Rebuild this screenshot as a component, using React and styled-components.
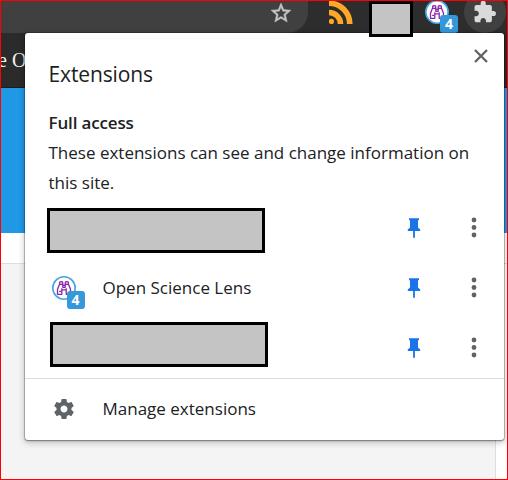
import React from "react";
import styled, { createGlobalStyle } from "styled-components";

const Global = createGlobalStyle`
  * { box-sizing: border-box; }
  body { margin: 0; font-family: "Open Sans", "Noto Sans", sans-serif; }
`;

const Frame = styled.div`
  position: relative;
  width: 508px;
  height: 480px;
  border: 1px solid #ff0000;
  background: #f4f4f4;
  display: flex;
  flex-direction: column;
  overflow: hidden;
`;

const Toolbar = styled.header`
  height: 32px;
  flex: none;
  display: flex;
  align-items: flex-start;
  background: #2d2d2d;
`;

const AddressBar = styled.div`
  width: 307px;
  height: 32px;
  display: flex;
  justify-content: flex-end;
  padding: 0 15px 0 0;
  background: #404040;
  border-radius: 0 0 21px 0;
`;

const Svg = styled.svg`
  display: block;
  flex: none;
`;

const Spacer = styled.div`
  width: ${(p) => p.$w}px;
  flex: none;
`;

const Redacted = styled.div`
  position: relative;
  z-index: ${(p) => (p.$over ? 3 : 0)};
  flex: none;
  width: ${(p) => p.$w}px;
  height: ${(p) => p.$h}px;
  margin: ${(p) => p.$m || 0};
  border: 3px solid #000;
  background: #c4c4c4;
`;

const PuzzleButton = styled.div`
  width: 42px;
  height: 32px;
  margin-left: 5px;
  overflow: hidden;
  background: radial-gradient(circle at 21px 11px, #404040 20.5px, transparent 21.2px);
`;

const SiteHeader = styled.div`
  height: 55px;
  flex: none;
  display: flex;
  align-items: center;
  background: #2b2b2b;
  border-bottom: 1px solid #1c1c1c;
`;

const SiteTitle = styled.div`
  margin-left: -3px;
  color: #f1f1f1;
  font: 20px/26px "Liberation Serif", serif;
  white-space: nowrap;
`;

const Banner = styled.div`
  height: 145px;
  flex: none;
  background: #1f99e6;
`;

const Strip = styled.div`
  height: 31px;
  flex: none;
  background: #fff;
  border-bottom: 1px solid #dedede;
`;

const Content = styled.div`
  flex: 1;
  display: flex;
  justify-content: flex-end;
`;

const Gutter = styled.div`
  width: 12px;
  background: #fff;
  border-left: 1px solid #dedede;
`;

const Popup = styled.section`
  position: absolute;
  z-index: 2;
  left: 24px;
  top: 32px;
  width: 479px;
  height: 407px;
  background: #fff;
  border-radius: 3px;
  box-shadow: 0 0 0 1px rgba(0, 0, 0, 0.18), 0 1px 2px rgba(0, 0, 0, 0.3), 0 2px 6px 1px rgba(0, 0, 0, 0.2);
  color: #202124;
  display: flex;
  flex-direction: column;
`;

const TitleRow = styled.div`
  height: 75px;
  flex: none;
  display: flex;
  justify-content: space-between;
  padding: 16px 16.5px 0 23.5px;
`;

const Title = styled.h1`
  margin: 10px 0 0;
  font-size: 21px;
  line-height: 30px;
  font-weight: 400;
  letter-spacing: -0.12px;
  height: 30px;
`;

const Access = styled.div`
  height: 90px;
  flex: none;
  padding-left: 23.5px;
  font-size: 17px;
  line-height: 30px;
  white-space: nowrap;
`;

const Line = styled.div`
  letter-spacing: ${(p) => p.$ls || 0}px;
  font-weight: ${(p) => (p.$strong ? 600 : 400)};
`;

const Row = styled.div`
  height: 60px;
  flex: none;
  display: flex;
  align-items: center;
`;

const Name = styled.div`
  flex: none;
  font-size: 17px;
  line-height: 30px;
  white-space: nowrap;
`;

const Actions = styled.div`
  margin-left: auto;
  padding-right: 19px;
  display: flex;
  align-items: center;
  gap: 42px;
`;

const Footer = styled.div`
  height: 61px;
  flex: none;
  border-top: 1px solid #dadce0;
  display: flex;
  align-items: center;
  padding-left: 26.5px;
`;

const IconWrap = styled.div`
  position: relative;
  width: 34px;
  height: 34px;
  flex: none;
  margin: ${(p) => p.$m};
`;

const Badge = styled.span`
  position: absolute;
  left: 15px;
  top: 15px;
  width: 18px;
  height: 18px;
  border-radius: 3px;
  background: #3498db;
  color: #fff;
  font: 700 14px/18px "Open Sans", sans-serif;
  text-align: center;
`;

function LensIcon({ m }) {
  return (
    <IconWrap $m={m}>
      <Svg width="24" height="24" viewBox="0 0 24 24">
        <circle cx="12" cy="12" r="11.2" fill="#fff" stroke="#42a5e6" strokeWidth="1.6" />
        <g fill="none" stroke="#8e24aa" strokeWidth="1.3" strokeLinejoin="round">
          <path d="M7.700 8.300V6.200l1.500-.6 1.500.6v2.100M13.300 8.300V6.200l1.500-.6 1.500.6v2.100" />
          <path d="M7.500 8.300h3.300v3h2.400v-3h3.300l2 5v5h-4.300v-4.500h-4.400v4.500H5.500v-5z" />
          <path d="M10.800 9.300h2.400M9.800 13.800v-1.600M14.200 13.800v-1.600M7.200 15.300h2" />
        </g>
      </Svg>
      <Badge>4</Badge>
    </IconWrap>
  );
}

function Star() {
  return (
    <Svg width="24" height="24" viewBox="0 0 24 24">
      <path fill="#c4c4c4" stroke="#c4c4c4" strokeWidth="0.5" d="M22 9.24l-7.19-.62L12 2 9.19 8.63 2 9.24l5.46 4.73L5.82 21 12 17.27 18.18 21l-1.63-7.03L22 9.24zM12 15.4l-3.76 2.27 1-4.28-3.32-2.88 4.38-.38L12 6.1l1.71 4.04 4.38.38-3.32 2.88 1 4.28L12 15.4z" />
    </Svg>
  );
}

function Feed() {
  return (
    <Svg width="24" height="23" viewBox="0 0 24 23">
      <circle cx="2.4" cy="20.4" r="2.6" fill="#ffa726" />
      <path d="M0 11.5A11.5 11.5 0 0 1 11.5 23M0 2.2A20.8 20.8 0 0 1 20.8 23" fill="none" stroke="#ffa726" strokeWidth="5.600" />
    </Svg>
  );
}

function Puzzle() {
  return (
    <Svg width="42" height="32" viewBox="0 0 42 32">
      <path transform="translate(8.5 -1.2) scale(1.02)" fill="#dadada" d="M20.5 11H19V7c0-1.1-.9-2-2-2h-4V3.500a2.500 2.500 0 0 0-5 0V5H4c-1.100 0-1.990.9-1.990 2v3.800H3.500c1.490 0 2.700 1.210 2.700 2.700s-1.210 2.700-2.700 2.700H2V20c0 1.100.9 2 2 2h3.800v-1.500c0-1.490 1.210-2.700 2.700-2.700s2.700 1.210 2.700 2.700V22H17c1.100 0 2-.9 2-2v-4h1.500a2.500 2.500 0 0 0 0-5z" />
    </Svg>
  );
}

function Pin() {
  return (
    <Svg width="14" height="22" viewBox="0 0 14 22">
      <path fill="#1a73e8" d="M2 1.300h10v1.900h-1V10.500l2.200 2v1.600H7.900v6.700H6.100v-6.700H.8v-1.600l2.200-2V3.200H2z" />
    </Svg>
  );
}

function Dots() {
  return (
    <Svg width="22" height="22" viewBox="0 0 22 22" fill="#5f6368">
      <circle cx="11" cy="3" r="2.400" />
      <circle cx="11" cy="10.500" r="2.400" />
      <circle cx="11" cy="18" r="2.400" />
    </Svg>
  );
}

function Close() {
  return (
    <Svg width="14" height="14" viewBox="0 0 14 14">
      <path d="M1 1l12 12M13 1L1 13" stroke="#5f6368" strokeWidth="2.300" />
    </Svg>
  );
}

function Gear() {
  return (
    <Svg width="24" height="24" viewBox="0 0 24 24">
      <path fill="#5f6368" d="M19.430 12.980c.04-.32.07-.64.07-.98s-.03-.66-.07-.98l2.110-1.650c.19-.15.24-.42.12-.64l-2-3.460c-.12-.22-.39-.3-.61-.22l-2.490 1c-.52-.4-1.080-.73-1.690-.98l-.38-2.650C14.460 2.180 14.250 2 14 2h-4c-.25 0-.46.18-.49.42l-.38 2.650c-.61.25-1.170.59-1.690.98l-2.490-1c-.23-.09-.49 0-.61.22l-2 3.460c-.13.22-.07.49.12.64l2.110 1.650c-.04.32-.07.65-.07.98s.03.66.07.98l-2.110 1.650c-.19.15-.24.42-.12.64l2 3.460c.12.22.39.3.61.22l2.490-1c.52.4 1.080.73 1.690.98l.38 2.650c.03.24.24.42.49.42h4c.25 0 .46-.18.49-.42l.38-2.650c.61-.25 1.170-.59 1.690-.98l2.490 1c.23.09.49 0 .61-.22l2-3.460c.12-.22.07-.49-.12-.64l-2.110-1.650zM12 15.500c-1.930 0-3.500-1.570-3.500-3.500s1.570-3.500 3.500-3.500 3.500 1.570 3.500 3.500-1.570 3.500-3.500 3.500z" />
    </Svg>
  );
}

function RowActions() {
  return (
    <Actions>
      <Pin />
      <Dots />
    </Actions>
  );
}

export default function App() {
  return (
    <>
      <Global />
      <Frame>
        <Toolbar>
          <AddressBar>
            <Star />
          </AddressBar>
          <Spacer $w={21} />
          <Feed />
          <Spacer $w={16} />
          <Redacted $w={44} $h={36} $over />
          <LensIcon m="-1px 0 0 12px" />
          <PuzzleButton>
            <Puzzle />
          </PuzzleButton>
        </Toolbar>
        <SiteHeader>
          <SiteTitle>e O</SiteTitle>
        </SiteHeader>
        <Banner />
        <Strip />
        <Content>
          <Gutter />
        </Content>
        <Popup>
          <TitleRow>
            <Title>Extensions</Title>
            <Close />
          </TitleRow>
          <Access>
            <Line $strong $ls={-0.15}>Full access</Line>
            <Line>These extensions can see and change information on</Line>
            <Line>this site.</Line>
          </Access>
          <Row>
            <Redacted $w={218} $h={45} $m="4px 0 0 22px" />
            <RowActions />
          </Row>
          <Row>
            <LensIcon m="9px 17px 0 26.5px" />
            <Name>Open Science Lens</Name>
            <RowActions />
          </Row>
          <Row>
            <Redacted $w={218} $h={45} $m="0 0 7px 25px" />
            <RowActions />
          </Row>
          <Footer>
            <Gear />
            <Spacer $w={27} />
            <Name>Manage extensions</Name>
          </Footer>
        </Popup>
      </Frame>
    </>
  );
}
